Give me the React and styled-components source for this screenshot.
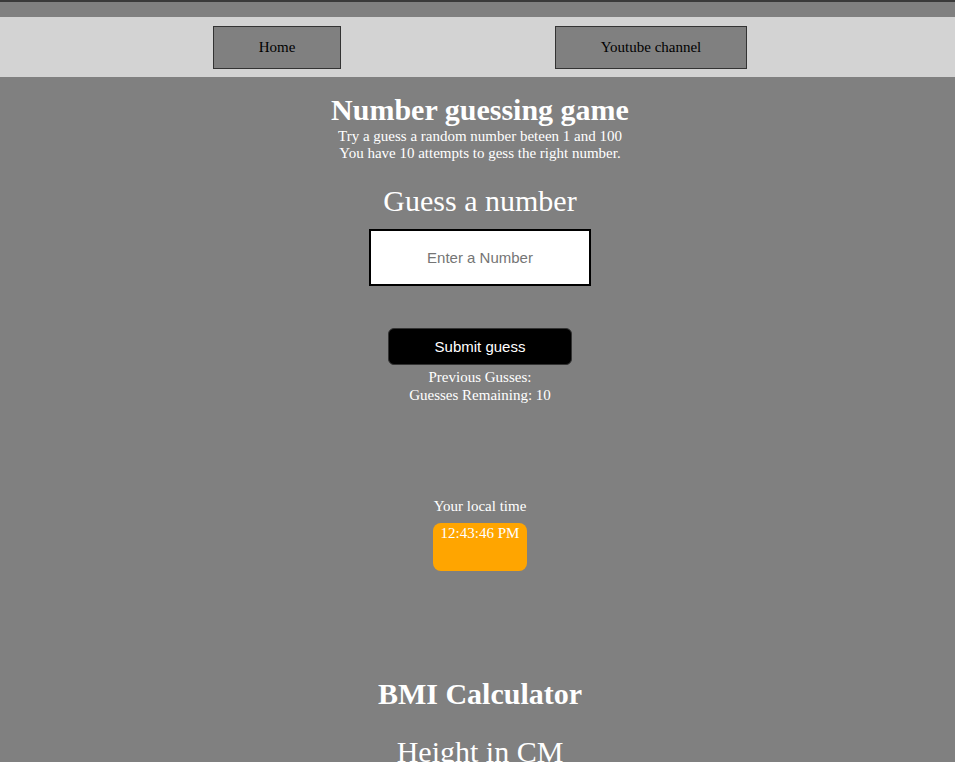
import React from 'react'
import styled, { createGlobalStyle } from 'styled-components'

const GlobalStyle = createGlobalStyle`
  html, body {
    margin: 0;
    padding: 0;
    background: #808080;
  }
  body {
    font-family: "Liberation Serif", "Times New Roman", serif;
    font-size: 15px;
    color: #fff;
    border-top: 2px solid #3a3a3a;
  }
`

const Page = styled.div`
  display: flex;
  flex-direction: column;
  padding-top: 15px;
`

const NavBar = styled.nav`
  display: flex;
  justify-content: center;
  align-items: flex-start;
  gap: 214px;
  height: 60px;
  padding: 9px 0 0 5px;
  box-sizing: border-box;
  background: #d3d3d3;
`

const NavButton = styled.div`
  display: flex;
  justify-content: center;
  align-items: center;
  width: ${props => props.width}px;
  height: 43px;
  box-sizing: border-box;
  border: 1px solid #333;
  background: #808080;
  color: #000;
  font-size: 15px;
`

const Main = styled.main`
  display: flex;
  flex-direction: column;
  align-items: center;
  padding-left: 5px;
`

const Title = styled.h1`
  margin: 15px 0 0;
  font-size: 30px;
  line-height: 36px;
  font-weight: bold;
`

const Line = styled.div`
  line-height: ${props => props.lh || 17}px;
  text-align: center;
`

const SubTitle = styled.h2`
  margin: 22px 0 11px;
  font-size: 30px;
  line-height: 34px;
  font-weight: normal;
`

const NumberInput = styled.input`
  width: 222px;
  height: 57px;
  box-sizing: border-box;
  border: 2px solid #000;
  background: #fff;
  text-align: center;
  font-family: "Liberation Sans", Arial, sans-serif;
  font-size: 15px;
  outline: none;

  &::placeholder {
    color: #757575;
  }
`

const SubmitButton = styled.button`
  margin-top: 42px;
  width: 184px;
  height: 37px;
  border: 1px solid #333;
  border-radius: 6px;
  background: #000;
  color: #fff;
  font-family: "Liberation Sans", Arial, sans-serif;
  font-size: 15px;
`

const Results = styled.div`
  margin-top: 3px;
  display: flex;
  flex-direction: column;
  align-items: center;
`

const TimeLabel = styled.div`
  margin-top: 94px;
  line-height: 17px;
`

const Clock = styled.div`
  margin-top: 8px;
  width: 94px;
  height: 48px;
  box-sizing: border-box;
  padding-top: 2px;
  border-radius: 8px;
  background: #ffa500;
  text-align: center;
  line-height: 17px;
`

const BmiTitle = styled.h2`
  margin: 106px 0 0;
  font-size: 30px;
  line-height: 34px;
  font-weight: bold;
`

const BmiLabel = styled.h2`
  margin: 24px 0 0;
  font-size: 30px;
  line-height: 34px;
  font-weight: normal;
`

export default function App() {
  return (
    <>
      <GlobalStyle />
      <Page>
        <NavBar>
          <NavButton width={128}>Home</NavButton>
          <NavButton width={192}>Youtube channel</NavButton>
        </NavBar>
        <Main>
          <Title>Number guessing game</Title>
          <Line>Try a guess a random number beteen 1 and 100</Line>
          <Line>You have 10 attempts to gess the right number.</Line>
          <SubTitle>Guess a number</SubTitle>
          <NumberInput type="text" inputMode="numeric" placeholder="Enter a Number" />
          <SubmitButton>Submit guess</SubmitButton>
          <Results>
            <Line lh={18}>Previous Gusses:</Line>
            <Line lh={18}>Guesses Remaining: 10</Line>
          </Results>
          <TimeLabel>Your local time</TimeLabel>
          <Clock>12:43:46 PM</Clock>
          <BmiTitle>BMI Calculator</BmiTitle>
          <BmiLabel>Height in CM</BmiLabel>
        </Main>
      </Page>
    </>
  )
}
